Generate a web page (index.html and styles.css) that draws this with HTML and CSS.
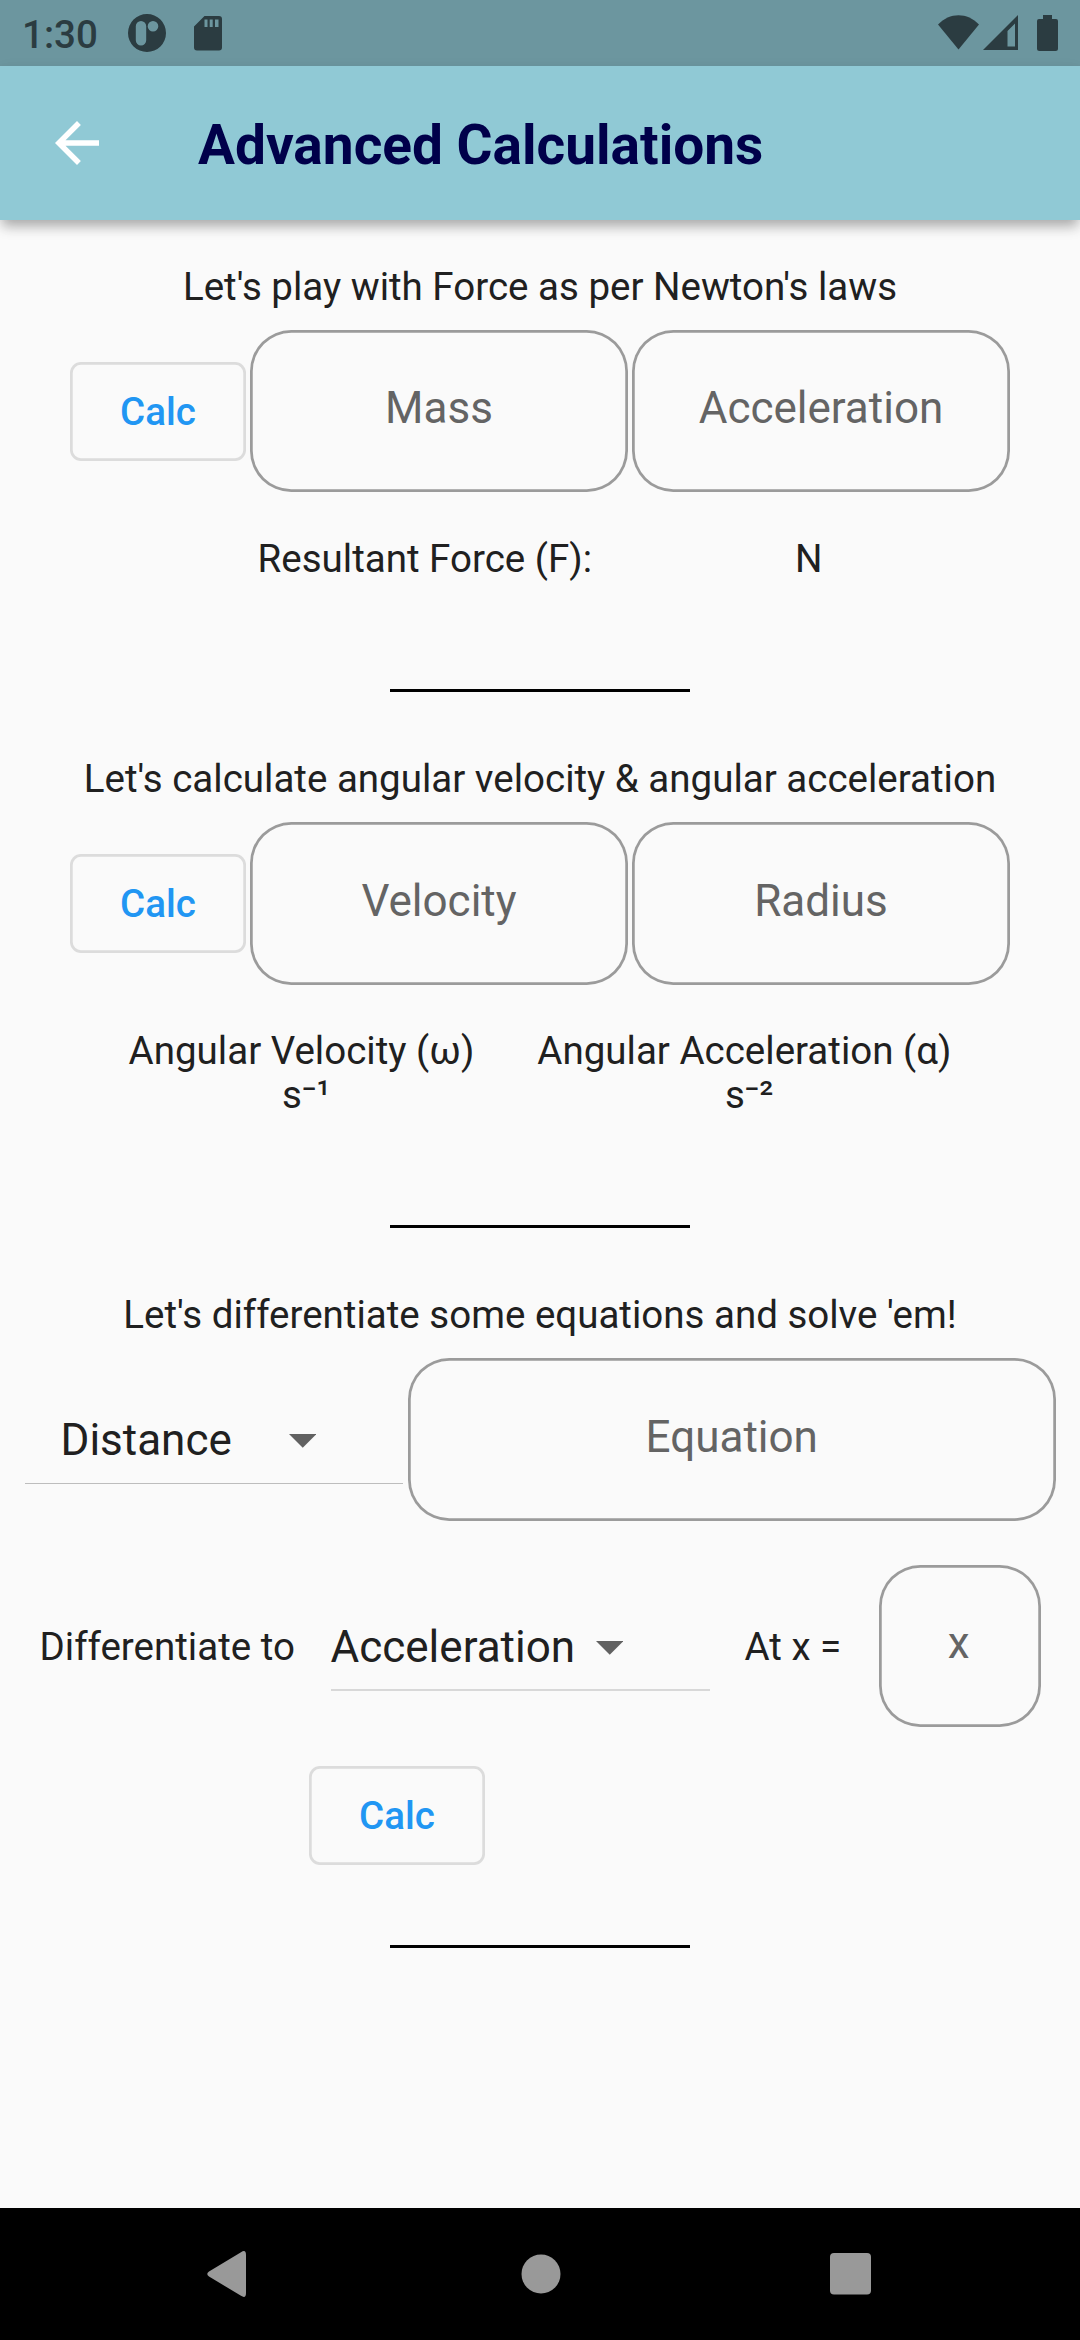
FILE: index.html
```html
<!DOCTYPE html>
<html lang="en">
<head>
<meta charset="utf-8">
<title>Advanced Calculations</title>
<link rel="stylesheet" href="styles.css">
</head>
<body>
<div class="status-bar">
  <span class="clock">1:30</span>
  <svg class="icon-app" width="38" height="38" viewBox="0 0 38 38"><path fill-rule="evenodd" d="M19 0a19 19 0 1 0 0 38a19 19 0 1 0 0-38zM13 7a5.2 5.2 0 0 1 5.2 5.2v14a5.2 5.2 0 0 1-10.4 0v-14A5.2 5.2 0 0 1 13 7zM25 7a5.3 5.3 0 1 1 0 10.6a5.3 5.3 0 1 1 0-10.6z"/></svg>
  <svg class="icon-sd" width="28" height="35" viewBox="0 0 28 35"><path fill-rule="evenodd" d="M10.500 0H25a3 3 0 0 1 3 3v28.500a3 3 0 0 1-3 3H3a3 3 0 0 1-3-3V10.500zM10.500 3.500v7.500h3V3.500zM15.700 3.500v7.500h3V3.500zM21 3.500v7.500h3.500V3.500z"/></svg>
  <span class="spacer"></span>
  <svg class="icon-wifi" width="41" height="35" viewBox="0 0 41 35"><path d="M0 9.500C11.500-3 29.500-3 41 9.500L20.500 34.500z"/></svg>
  <svg class="icon-signal" width="35" height="35" viewBox="0 0 35 35"><path fill-rule="evenodd" d="M35 0v35H0zM32 8.500l-7.500 7.500v15.500H32z"/></svg>
  <svg class="icon-battery" width="21" height="36" viewBox="0 0 21 36"><path d="M6 0h9v4h4a2 2 0 0 1 2 2v27.500a2.500 2.500 0 0 1-2.500 2.500h-16a2.500 2.500 0 0 1-2.500-2.500V6a2 2 0 0 1 2-2h4z"/></svg>
</div>
<header class="app-bar">
  <svg class="back" width="44" height="44" viewBox="4 4 16 16"><path d="M20 11H7.830l5.590-5.590L12 4l-8 8 8 8 1.410-1.410L7.830 13H20z"/></svg>
  <h1 class="title">Advanced Calculations</h1>
</header>
<main class="content">
  <section class="section">
    <p class="heading">Let's play with Force as per Newton's laws</p>
    <div class="row row-inputs">
      <div class="button">Calc</div>
      <div class="field field-half">Mass</div>
      <div class="field field-half">Acceleration</div>
    </div>
    <div class="row row-force"><span>Resultant Force (F):</span><span>N</span></div>
    <div class="divider"></div>
  </section>
  <section class="section">
    <p class="heading">Let's calculate angular velocity &amp; angular acceleration</p>
    <div class="row row-inputs">
      <div class="button">Calc</div>
      <div class="field field-half">Velocity</div>
      <div class="field field-half">Radius</div>
    </div>
    <div class="row row-angular">
      <div class="result"><div>Angular Velocity (ω)</div><div> s⁻¹</div></div>
      <div class="result"><div>Angular Acceleration (α)</div><div> s⁻²</div></div>
    </div>
    <div class="divider"></div>
  </section>
  <section class="section">
    <p class="heading">Let's differentiate some equations and solve 'em!</p>
    <div class="row row-equation">
      <div class="select select-from"><span class="select-label">Distance</span><svg class="arrow" width="27.500" height="14" viewBox="0 0 27.500 14"><path d="M0 0h27.500L13.750 13.750z"/></svg></div>
      <div class="field field-wide">Equation</div>
    </div>
    <div class="row row-target">
      <span class="target-label">Differentiate to</span>
      <div class="select select-to"><span class="select-label">Acceleration</span><svg class="arrow" width="27.500" height="14" viewBox="0 0 27.500 14"><path d="M0 0h27.500L13.750 13.750z"/></svg></div>
      <span class="at-label">At x =</span>
      <div class="field field-x">x</div>
    </div>
    <div class="row row-submit"><div class="button">Calc</div></div>
    <div class="divider"></div>
  </section>
</main>
<nav class="nav-bar">
  <svg class="nav-back" width="39" height="46" viewBox="0 0 39 46"><path d="M34 1.200Q39-2 39 4V42Q39 48 34 44.800L2 25.500Q-1.500 23 2 20.500z"/></svg>
  <svg class="nav-home" width="40" height="40" viewBox="0 0 40 40"><circle cx="20" cy="20" r="19.500"/></svg>
  <svg class="nav-recent" width="41" height="42" viewBox="0 0 41 42"><rect width="41" height="41.500" rx="4"/></svg>
</nav>
</body>
</html>
```

FILE: styles.css
```css
* { box-sizing: border-box; }

body {
  margin: 0;
  width: 1080px;
  height: 2340px;
  display: flex;
  flex-direction: column;
  overflow: hidden;
  background: #fafafa;
  color: #202020;
  font-family: Roboto, "Noto Sans", sans-serif;
  font-size: 38.5px;
  line-height: 45px;
}

svg { display: block; flex: none; }

.status-bar {
  height: 66px;
  flex: none;
  display: flex;
  align-items: flex-start;
  padding: 0 22px;
  background: #6c969f;
  color: #2b3c41;
  fill: #2b3c41;
}
.clock { width: 106px; margin-top: 12px; font-weight: 500; white-space: nowrap; }
.icon-app { margin-top: 14px; }
.icon-sd { margin: 16px 0 0 28px; }
.spacer { flex: 1; }
.icon-wifi { margin-top: 15px; }
.icon-signal { margin: 15px 0 0 4px; }
.icon-battery { margin: 15px 0 0 19px; }

.app-bar {
  position: relative;
  z-index: 1;
  height: 154px;
  flex: none;
  display: flex;
  align-items: center;
  padding-left: 55px;
  background: #90c9d5;
  box-shadow: 0 8px 12px -2px rgba(0, 0, 0, 0.3), 0 4px 16px rgba(0, 0, 0, 0.05);
}
.back { fill: #fff; }
.title {
  margin: 4px 0 0 99px;
  color: #00004a;
  font-size: 55px;
  line-height: 64px;
  font-weight: 700;
  white-space: nowrap;
}

.content { flex: 1; padding-top: 44px; }
.section { display: flex; flex-direction: column; align-items: center; margin-bottom: 64.5px; }
.heading { margin: 0 0 21px; white-space: nowrap; }
.row { display: flex; align-items: center; white-space: nowrap; }
.row-inputs { gap: 4px; }
.row-force { margin-top: 43.75px; gap: 203px; }
.row-angular { margin-top: 44px; gap: 63px; }
.result { text-align: center; line-height: 44px; white-space: pre; }
.divider { width: 300px; height: 3px; margin-top: 107.75px; background: #000; }
.row-angular + .divider { margin-top: 108.25px; }

.button {
  width: 176px;
  height: 99px;
  flex: none;
  border-radius: 11px;
  box-shadow: inset 0 0 0 2.75px #dcdcdc;
  color: #2196f3;
  font-weight: 500;
  line-height: 99px;
  text-align: center;
}
.field {
  height: 162.25px;
  flex: none;
  padding-top: 0.4px;
  border-radius: 41.25px;
  box-shadow: inset 0 0 0 2.75px #9b9b9b;
  color: #646464;
  font-size: 44px;
  line-height: 156px;
  text-align: center;
}
.field-half { width: 378px; }
.field-wide { width: 647.5px; }
.field-x { width: 162.25px; padding-right: 2px; }

.row-equation { gap: 5.5px; }
.select {
  height: 89px;
  display: flex;
  align-items: center;
  padding-top: 2px;
  border-bottom: 1px solid #bdbdbd;
  font-size: 44px;
  line-height: 52px;
}
.select-from { width: 378px; padding-left: 36px; }
.select-from .select-label { width: 228px; }
.select-to { width: 379px; height: 91px; padding-top: 4px; border-bottom: 2px solid #d8d8d8; }
.select-to .select-label { width: 265px; }
.arrow { margin-top: 2px; fill: #616161; }

.row-target { width: 1080px; margin-top: 44px; padding-left: 39.5px; }
.target-label { width: 291px; margin-top: 2px; }
.at-label { width: 134px; margin: 2px 0 0 35px; }
.row-submit { width: 1080px; margin-top: 39.25px; padding-left: 309px; }
.row-submit + .divider { margin-top: 80px; }

.nav-bar {
  height: 132px;
  flex: none;
  display: flex;
  align-items: center;
  justify-content: space-between;
  padding: 0 209px 0 206.5px;
  background: #000;
  fill: #999;
}
.nav-home { margin-left: 5.5px; }
```
